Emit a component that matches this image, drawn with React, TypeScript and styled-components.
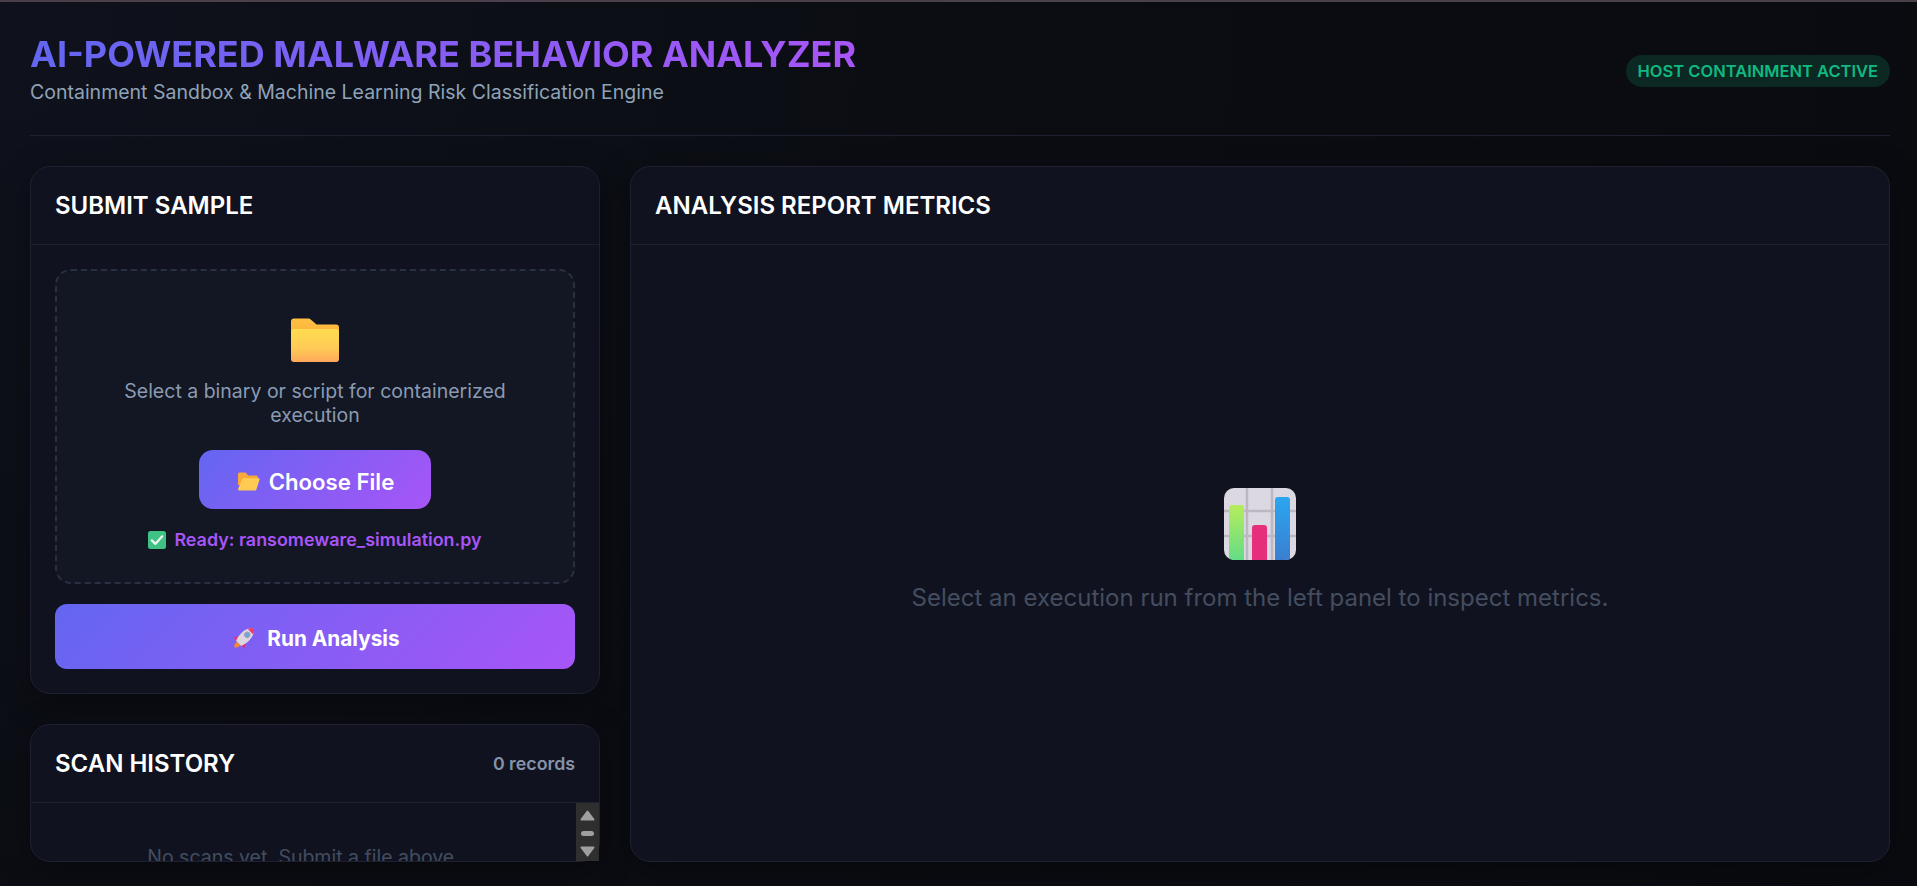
import React from 'react';
import styled, { createGlobalStyle } from 'styled-components';

const GlobalStyle = createGlobalStyle`
  html, body {
    margin: 0;
    padding: 0;
    height: 100%;
    overflow: hidden;
    background: #0a0c12;
  }
  * {
    box-sizing: border-box;
  }
  #root {
    height: 100%;
  }
`;

const Page = styled.div`
  height: 886px;
  overflow: hidden;
  border-top: 2px solid #4a4049;
  padding: 0 27px 24px 30px;
  display: flex;
  flex-direction: column;
  font-family: Inter, 'Liberation Sans', sans-serif;
  background: radial-gradient(circle at 0% 0%, #0f121c 0%, #0b0d13 45%, #0a0b10 100%);
`;

const Header = styled.header`
  height: 134px;
  flex-shrink: 0;
  display: flex;
  justify-content: space-between;
  align-items: flex-start;
  border-bottom: 1px solid #1d2130;
`;

const TitleBlock = styled.div`
  padding-top: 30px;
`;

const Title = styled.h1`
  margin: 0;
  font-size: 36px;
  line-height: 44px;
  font-weight: 700;
  background: linear-gradient(90deg, #6366f1, #a855f7);
  -webkit-background-clip: text;
  background-clip: text;
  color: transparent;
  width: fit-content;
`;

const Subtitle = styled.p`
  margin: 4px 0 0;
  font-size: 19.5px;
  line-height: 24px;
  color: #8fa3b8;
`;

const Badge = styled.span`
  margin-top: 53px;
  height: 32px;
  display: flex;
  align-items: center;
  padding: 0 12px;
  border-radius: 16px;
  background: #0c2823;
  color: #10b981;
  font-size: 16.5px;
  font-weight: 600;
`;

const Columns = styled.main`
  flex: 1;
  min-height: 0;
  padding-top: 30px;
  display: grid;
  grid-template-columns: 570px 1fr;
  column-gap: 30px;
`;

const LeftColumn = styled.div`
  display: flex;
  flex-direction: column;
  gap: 30px;
  min-height: 0;
`;

const Panel = styled.section<{ $fill?: boolean }>`
  display: flex;
  flex-direction: column;
  background: #10131f;
  border: 1px solid #1d2130;
  border-radius: 20px;
  box-shadow: 0 8px 32px rgba(0, 0, 0, 0.35);
  flex: ${(p) => (p.$fill ? '1' : '0 0 auto')};
  min-height: 0;
`;

const PanelHead = styled.div`
  height: 78px;
  flex-shrink: 0;
  display: flex;
  align-items: center;
  justify-content: space-between;
  padding: 0 24px;
  border-bottom: 1px solid #1d2130;
`;

const PanelTitle = styled.h2`
  margin: 0;
  font-size: 24px;
  font-weight: 600;
  color: #ffffff;
`;

const Records = styled.span`
  font-size: 17.8px;
  font-weight: 600;
  color: #8593a8;
`;

const SubmitBody = styled.div`
  padding: 24px 24px 24px;
  display: flex;
  flex-direction: column;
  gap: 20px;
`;

const DropZone = styled.div`
  height: 315px;
  background: #131623;
  border: 2px dashed #2a3041;
  border-radius: 16px;
  display: flex;
  flex-direction: column;
  align-items: center;
  padding: 46px 40px 0;
`;

const DropText = styled.p`
  margin: 16px 0 0;
  text-align: center;
  font-size: 19.5px;
  line-height: 24px;
  color: #8a9bb2;
`;

const GradientButton = styled.button<{ $wide?: boolean }>`
  display: flex;
  align-items: center;
  justify-content: center;
  gap: ${(p) => (p.$wide ? '12px' : '9px')};
  border: none;
  padding: 3px 0 0 2px;
  font-family: inherit;
  color: #ffffff;
  background: linear-gradient(135deg, #6366f1, #a855f7);
  width: ${(p) => (p.$wide ? '100%' : '232px')};
  height: ${(p) => (p.$wide ? '65px' : '59px')};
  border-radius: ${(p) => (p.$wide ? '12px' : '14px')};
  font-size: ${(p) => (p.$wide ? '20.8px' : '22.2px')};
  font-weight: ${(p) => (p.$wide ? 700 : 600)};
  margin-top: ${(p) => (p.$wide ? '0' : '23px')};
`;

const ReadyLine = styled.div`
  margin-top: 20px;
  display: flex;
  align-items: center;
  gap: 8px;
  font-size: 17.9px;
  font-weight: 600;
  color: #a855f7;
`;

const HistoryBody = styled.div`
  flex: 1;
  min-height: 0;
  display: flex;
  overflow: hidden;
`;

const EmptyHistory = styled.div`
  flex: 1;
  text-align: center;
  padding-top: 42px;
  font-size: 19.5px;
  line-height: 24px;
  color: #434d5f;
`;

const ScrollTrack = styled.div`
  width: 23px;
  background: #2f2f2f;
  display: flex;
  flex-direction: column;
  align-items: center;
  padding-top: 7px;
`;

const ScrollThumb = styled.div`
  width: 13px;
  height: 5px;
  border-radius: 2.5px;
  background: #9f9f9f;
  margin: 10px 0;
`;

const ReportBody = styled.div`
  flex: 1;
  display: flex;
  flex-direction: column;
  align-items: center;
  padding-top: 243px;
`;

const ReportText = styled.p`
  margin: 21px 0 0;
  font-size: 24px;
  line-height: 34px;
  color: #434d5f;
`;

const ArrowIcon = ({ down }: { down?: boolean }) => (
  <svg width="15" height="11" viewBox="0 0 15 11">
    <path
      d={down ? 'M1.5 0.5h12a1 1 0 0 1 .8 1.6L8.3 10a1 1 0 0 1-1.6 0L.7 2.1A1 1 0 0 1 1.5.5z' : 'M1.5 10.5h12a1 1 0 0 0 .8-1.6L8.3 1a1 1 0 0 0-1.6 0L.7 8.9a1 1 0 0 0 .8 1.6z'}
      fill="#9f9f9f"
    />
  </svg>
);

const FolderIcon = () => (
  <svg width="48" height="46" viewBox="0 0 48 46">
    <defs>
      <linearGradient id="folderBack" x1="0" y1="0" x2="0" y2="1">
        <stop offset="0" stopColor="#ffc043" />
        <stop offset="1" stopColor="#f9a83a" />
      </linearGradient>
      <linearGradient id="folderFront" x1="0" y1="0" x2="0" y2="1">
        <stop offset="0" stopColor="#ffdc4f" />
        <stop offset="0.6" stopColor="#ffc956" />
        <stop offset="1" stopColor="#ffa95c" />
      </linearGradient>
    </defs>
    <path d="M0 4.5A3 3 0 0 1 3 1.5h14.5a3 3 0 0 1 2.2 1L25.5 7.5H45a3 3 0 0 1 3 3V30H0z" fill="url(#folderBack)" />
    <path d="M0 15a3 3 0 0 1 3-3h42a3 3 0 0 1 3 3v27a3 3 0 0 1-3 3H3a3 3 0 0 1-3-3z" fill="url(#folderFront)" />
  </svg>
);

const OpenFolderIcon = () => (
  <svg width="22" height="19" viewBox="0 0 22 19">
    <path d="M0 2a1.5 1.5 0 0 1 1.5-1.5h5.5a1.5 1.5 0 0 1 1.1.5l2 2.5h8.4A1.5 1.5 0 0 1 20 5v8H0z" fill="#f9a83a" />
    <path d="M4.2 7.2A1.5 1.5 0 0 1 5.6 6.2h15a1 1 0 0 1 1 1.3l-3.2 10a1.5 1.5 0 0 1-1.4 1H1.5A1.5 1.5 0 0 1 0 17z" fill="#ffcb52" />
  </svg>
);

const CheckIcon = () => (
  <svg width="18" height="18" viewBox="0 0 18 18">
    <rect width="18" height="18" rx="2.5" fill="#3fc384" />
    <path d="M3.8 9.4l3.5 3.5 6.9-7.6" fill="none" stroke="#f4f4f4" strokeWidth="2.2" strokeLinecap="round" strokeLinejoin="round" />
  </svg>
);

// drawn upright, then turned 45deg so the nose points to the top right
const RocketIcon = () => (
  <svg width="23" height="23" viewBox="0 0 22 22">
    <g transform="rotate(45 11 11)">
      <path d="M8.5 17.5h5L13 21q-2 4-4 0z" fill="#f58a2c" />
      <path d="M6.8 11.500L3.800 17.500 7.800 17z" fill="#ec2f6b" />
      <path d="M15.200 11.500l3 6-4-.5z" fill="#ec2f6b" />
      <path d="M11-3c4.500 3 5.500 9 5 14-.2 3-1 5-1.500 6.500h-7C7 16 6.200 14 6 11 5.500 6 6.500 0 11-3z" fill="#dcd6e0" />
      <path d="M11-3c1.700 1.100 3 2.800 3.800 4.700H7.200C8-.2 9.300-1.900 11-3z" fill="#ee3a6e" />
      <circle cx="11" cy="6" r="2.500" fill="#6aa8dc" stroke="#a59eb0" />
    </g>
  </svg>
);

const ChartIcon = () => (
  <svg width="72" height="72" viewBox="0 0 72 72">
    <defs>
      <linearGradient id="barGreen" x1="0" y1="0" x2="0" y2="1">
        <stop offset="0" stopColor="#b6ec5c" />
        <stop offset="1" stopColor="#63dd85" />
      </linearGradient>
      <linearGradient id="barBlue" x1="0" y1="0" x2="0" y2="1">
        <stop offset="0" stopColor="#2ba6f0" />
        <stop offset="1" stopColor="#3a7fd0" />
      </linearGradient>
      <clipPath id="chartClip">
        <rect width="72" height="72" rx="10" />
      </clipPath>
    </defs>
    <g clipPath="url(#chartClip)">
      <rect width="72" height="72" fill="#dcd8e1" />
      <path d="M0 23h72M0 48h72M23 0v72M48 0v72" stroke="#bcb8c2" strokeWidth="2.5" />
      <path d="M5 20a3 3 0 0 1 3-3h9a3 3 0 0 1 3 3v52H5z" fill="url(#barGreen)" />
      <path d="M28 40a3 3 0 0 1 3-3h9a3 3 0 0 1 3 3v32H28z" fill="#e52f7c" />
      <path d="M51 12a3 3 0 0 1 3-3h9a3 3 0 0 1 3 3v60H51z" fill="url(#barBlue)" />
    </g>
  </svg>
);

const App: React.FC = () => {
  return (
    <>
      <GlobalStyle />
      <Page>
        <Header>
          <TitleBlock>
            <Title>AI-POWERED MALWARE BEHAVIOR ANALYZER</Title>
            <Subtitle>Containment Sandbox &amp; Machine Learning Risk Classification Engine</Subtitle>
          </TitleBlock>
          <Badge>HOST CONTAINMENT ACTIVE</Badge>
        </Header>

        <Columns>
          <LeftColumn>
            {/* Upload card */}
            <Panel>
              <PanelHead>
                <PanelTitle>SUBMIT SAMPLE</PanelTitle>
              </PanelHead>
              <SubmitBody>
                <DropZone>
                  <FolderIcon />
                  <DropText>Select a binary or script for containerized execution</DropText>
                  <GradientButton>
                    <OpenFolderIcon />
                    Choose File
                  </GradientButton>
                  <ReadyLine>
                    <CheckIcon />
                    Ready: ransomeware_simulation.py
                  </ReadyLine>
                </DropZone>
                <GradientButton $wide>
                  <RocketIcon />
                  Run Analysis
                </GradientButton>
              </SubmitBody>
            </Panel>

            {/* History card */}
            <Panel $fill>
              <PanelHead>
                <PanelTitle>SCAN HISTORY</PanelTitle>
                <Records>0 records</Records>
              </PanelHead>
              <HistoryBody>
                <EmptyHistory>No scans yet. Submit a file above.</EmptyHistory>
                <ScrollTrack>
                  <ArrowIcon />
                  <ScrollThumb />
                  <ArrowIcon down />
                </ScrollTrack>
              </HistoryBody>
            </Panel>
          </LeftColumn>

          <Panel>
            <PanelHead>
              <PanelTitle>ANALYSIS REPORT METRICS</PanelTitle>
            </PanelHead>
            <ReportBody>
              <ChartIcon />
              <ReportText>Select an execution run from the left panel to inspect metrics.</ReportText>
            </ReportBody>
          </Panel>
        </Columns>
      </Page>
    </>
  );
};

export default App;
